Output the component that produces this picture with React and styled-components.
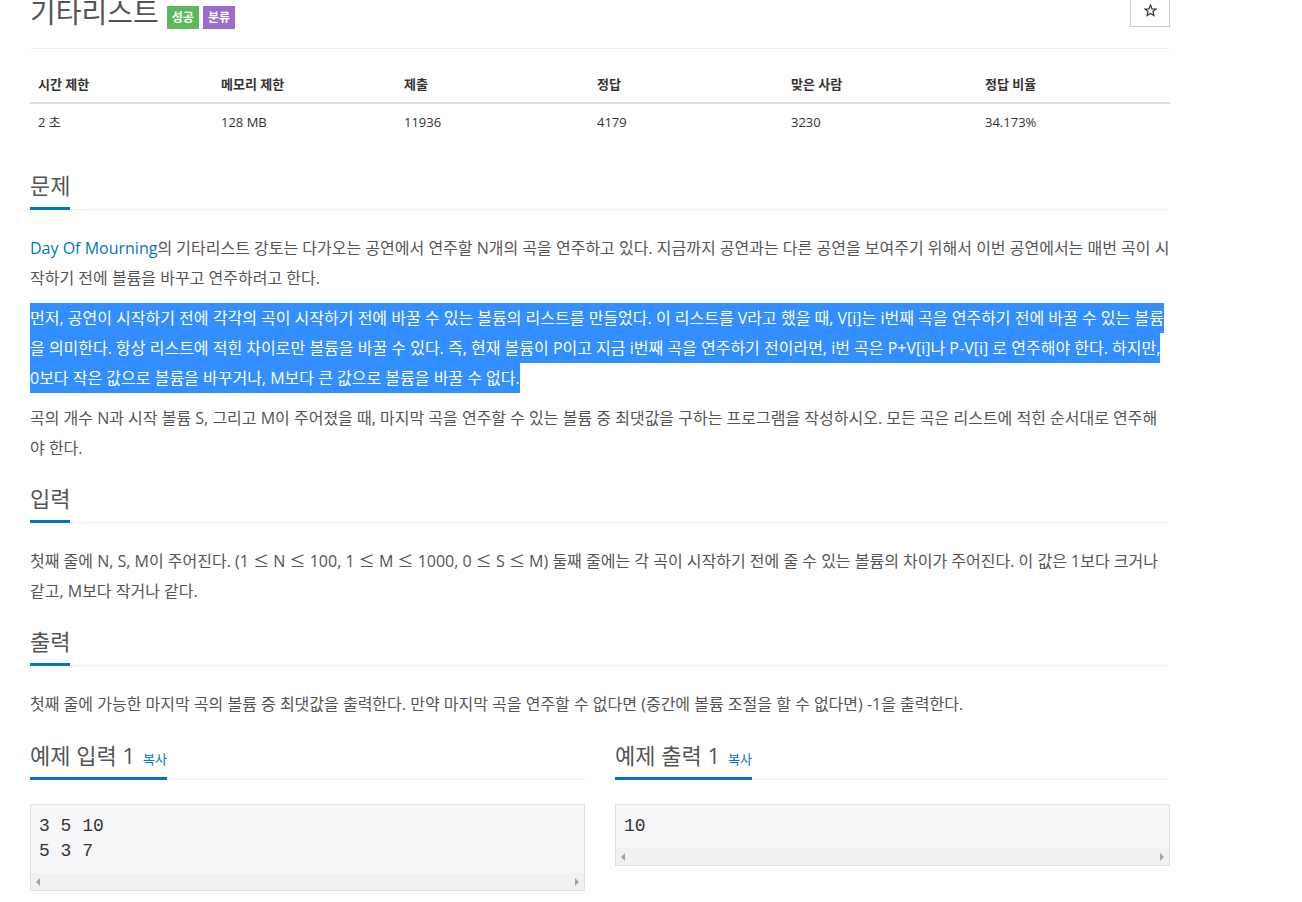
import React from 'react';
import styled, { createGlobalStyle } from 'styled-components';

const Global = createGlobalStyle`
  html, body { margin: 0; padding: 0; background: #fff; }
  body {
    font-family: "Open Sans", "Noto Sans CJK KR", sans-serif;
    color: #333;
    font-size: 14px;
    overflow: hidden;
  }
`;

const Page = styled.div`
  width: 1140px;
  margin: -7px 0 0 30px;
`;

const Header = styled.div`
  display: flex;
  justify-content: space-between;
  align-items: flex-start;
  height: 55px;
  border-bottom: 1px solid #eee;
`;

const TitleRow = styled.div`
  display: flex;
  align-items: flex-start;
  padding-top: 4px;
`;

const Title = styled.h1`
  margin: 0 8px 0 0;
  font-size: 28px;
  font-weight: 400;
  line-height: 31px;
  color: #555;
`;

const Badge = styled.span`
  margin: 9px 4px 0 0;
  height: 23px;
  line-height: 23px;
  padding: 0 5px;
  font-size: 12px;
  font-weight: 700;
  color: #fff;
  background: ${p => p.$color};
`;

const StarButton = styled.button`
  width: 40px;
  height: 34px;
  padding: 0;
  border: 1px solid #ccc;
  border-radius: 0;
  background: #fff;
  display: flex;
  align-items: center;
  justify-content: center;
`;

const Table = styled.div`
  margin-top: 17px;
  display: grid;
  grid-template-columns: 183px 183px 193px 194px 194px 193px;
  font-size: 13px;
  line-height: 20px;
`;

const Th = styled.div`
  padding: 8px;
  font-weight: 700;
  color: #333;
  border-bottom: 2px solid #ddd;
`;

const Td = styled.div`
  padding: 8px;
  color: #333;
`;

const Section = styled.section`
  margin-top: ${p => p.$top}px;
`;

const Headline = styled.div`
  border-bottom: 1px dotted #ddd;
  line-height: 0;
`;

const H2 = styled.h2`
  display: inline-block;
  margin: 0 0 -1px 0;
  padding-bottom: 10px;
  font-size: 22px;
  font-weight: 400;
  line-height: 24px;
  color: #555;
  border-bottom: 3px solid #0076c0;
`;

const Copy = styled.a`
  margin-left: 8px;
  font-size: 13px;
  line-height: 1;
  color: #0076c0;
  text-decoration: none;
  cursor: pointer;
`;

const Body = styled.div`
  margin-top: 23px;
`;

const P = styled.p`
  margin: 0 0 10px 0;
  font-size: 16px;
  line-height: 30px;
  color: #555;
  word-break: break-all;
`;

const Link = styled.a`
  color: #0076c0;
  text-decoration: none;
`;

const Op = styled.span`
  font-family: "Noto Sans CJK KR", sans-serif;
  line-height: 1;
`;

const Selected = styled.span`
  background: #338fff;
  color: #fff;
  padding: 4px 0;
`;

const Samples = styled.div`
  margin-top: 24px;
  display: grid;
  grid-template-columns: 555px 555px;
  column-gap: 30px;
`;

const PreBox = styled.div`
  margin-top: 24px;
  border: 1px solid #e1e1e8;
  background: #f7f7f9;
`;

const Pre = styled.pre`
  margin: 0;
  padding: 9px 8px;
  font-family: "Liberation Mono", monospace;
  font-size: 18px;
  line-height: 25px;
  color: #333;
`;

const ScrollTrack = styled.div`
  height: 17px;
  background: #f1f1f1;
  display: flex;
  justify-content: space-between;
  align-items: center;
  padding: 0 5px;
`;

const Arrow = styled.span`
  width: 0;
  height: 0;
  border-top: 4px solid transparent;
  border-bottom: 4px solid transparent;
  ${p => p.$dir === 'left'
    ? 'border-right: 4px solid #a3a3a3;'
    : 'border-left: 4px solid #a3a3a3;'}
`;

const Star = () => (
  <svg width="13" height="13" viewBox="0 0 24 24" fill="none" stroke="#333" strokeWidth="2.2" strokeLinejoin="miter">
    <polygon points="12,2 14.9,8.9 22,9.3 16.5,14 18.3,21.2 12,17.3 5.7,21.2 7.5,14 2,9.3 9.1,8.9" />
  </svg>
);

const SampleBox = ({ title, data }) => (
  <div>
    <Headline>
      <H2>{title}<Copy>복사</Copy></H2>
    </Headline>
    <PreBox>
      <Pre>{data}</Pre>
      <ScrollTrack>
        <Arrow $dir="left" />
        <Arrow $dir="right" />
      </ScrollTrack>
    </PreBox>
  </div>
);

export default function App() {
  const heads = ['시간 제한', '메모리 제한', '제출', '정답', '맞은 사람', '정답 비율'];
  const vals = ['2 초', '128 MB', '11936', '4179', '3230', '34.173%'];
  return (
    <>
      <Global />
      <Page>
        <Header>
          <TitleRow>
            <Title>기타리스트</Title>
            <Badge $color="#5cb85c">성공</Badge>
            <Badge $color="#9b6bcc">분류</Badge>
          </TitleRow>
          <StarButton><Star /></StarButton>
        </Header>

        <Table>
          {heads.map(h => <Th key={h}>{h}</Th>)}
          {vals.map(v => <Td key={v}>{v}</Td>)}
        </Table>

        <Section $top={33}>
          <Headline><H2>문제</H2></Headline>
          <Body>
            <P>
              <Link>Day Of Mourning</Link>의 기타리스트 강토는 다가오는 공연에서 연주할 N개의 곡을 연주하고 있다. 지금까지 공연과는 다른 공연을 보여주기 위해서 이번 공연에서는 매번 곡이 시작하기 전에 볼륨을 바꾸고 연주하려고 한다.
            </P>
            <P>
              <Selected>먼저, 공연이 시작하기 전에 각각의 곡이 시작하기 전에 바꿀 수 있는 볼륨의 리스트를 만들었다. 이 리스트를 V라고 했을 때, V[i]는 i번째 곡을 연주하기 전에 바꿀 수 있는 볼륨을 의미한다. 항상 리스트에 적힌 차이로만 볼륨을 바꿀 수 있다. 즉, 현재 볼륨이 P이고 지금 i번째 곡을 연주하기 전이라면, i번 곡은 P+V[i]나 P-V[i] 로 연주해야 한다. 하지만, 0보다 작은 값으로 볼륨을 바꾸거나, M보다 큰 값으로 볼륨을 바꿀 수 없다.</Selected>
            </P>
            <P>
              곡의 개수 N과 시작 볼륨 S, 그리고 M이 주어졌을 때, 마지막 곡을 연주할 수 있는 볼륨 중 최댓값을 구하는 프로그램을 작성하시오. 모든 곡은 리스트에 적힌 순서대로 연주해야 한다.
            </P>
          </Body>
        </Section>

        <Section $top={23}>
          <Headline><H2>입력</H2></Headline>
          <Body>
            <P>
              첫째 줄에 N, S, M이 주어진다. (1 <Op>≤</Op> N <Op>≤</Op> 100, 1 <Op>≤</Op> M <Op>≤</Op> 1000, 0 <Op>≤</Op> S <Op>≤</Op> M) 둘째 줄에는 각 곡이 시작하기 전에 줄 수 있는 볼륨의 차이가 주어진다. 이 값은 1보다 크거나 같고, M보다 작거나 같다.
            </P>
          </Body>
        </Section>

        <Section $top={23}>
          <Headline><H2>출력</H2></Headline>
          <Body>
            <P>
              첫째 줄에 가능한 마지막 곡의 볼륨 중 최댓값을 출력한다. 만약 마지막 곡을 연주할 수 없다면 (중간에 볼륨 조절을 할 수 없다면) -1을 출력한다.
            </P>
          </Body>
        </Section>

        <Samples>
          <SampleBox title="예제 입력 1" data={'3 5 10\n5 3 7'} />
          <SampleBox title="예제 출력 1" data={'10'} />
        </Samples>
      </Page>
    </>
  );
}
